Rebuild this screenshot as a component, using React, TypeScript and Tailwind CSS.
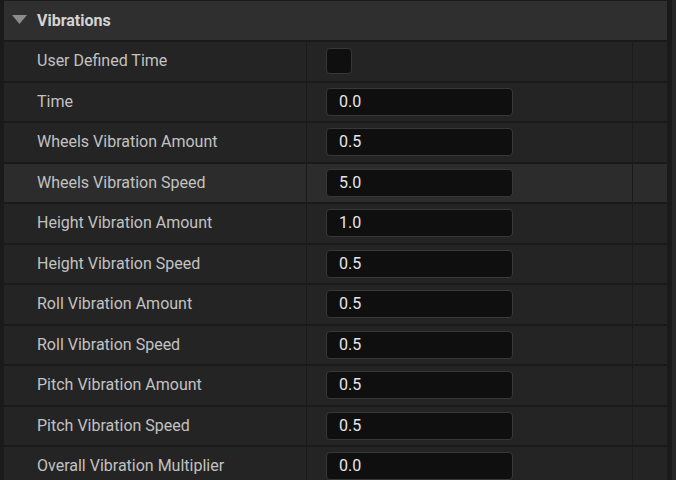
const rows: { label: string; value?: string; checkbox?: boolean; active?: boolean }[] = [
  { label: "User Defined Time", checkbox: true },
  { label: "Time", value: "0.0" },
  { label: "Wheels Vibration Amount", value: "0.5" },
  { label: "Wheels Vibration Speed", value: "5.0", active: true },
  { label: "Height Vibration Amount", value: "1.0" },
  { label: "Height Vibration Speed", value: "0.5" },
  { label: "Roll Vibration Amount", value: "0.5" },
  { label: "Roll Vibration Speed", value: "0.5" },
  { label: "Pitch Vibration Amount", value: "0.5" },
  { label: "Pitch Vibration Speed", value: "0.5" },
  { label: "Overall Vibration Multiplier", value: "0.0" },
];

export default function App() {
  return (
    <div className="w-[676px] h-[480px] overflow-hidden bg-[#1a1a1a] flex font-['Roboto',sans-serif]">
      <div className="w-[663px] ml-[4px] flex flex-col gap-[2px] pt-[1px]">
        <div className="h-[39px] shrink-0 bg-[#2f2f2f] flex items-center">
          <svg width="15" height="9" viewBox="0 0 15 9" className="ml-[8px] mr-[10px] mt-[-2px]">
            <polygon points="0,0 15,0 7.5,9" fill="#8c8c8c" />
          </svg>
          <span className="text-[16px] font-bold text-[#d4d4d4]">Vibrations</span>
        </div>
        {rows.map((row, i) => (
          <div
            key={i}
            className={`h-[38.5px] shrink-0 flex ${row.active ? "bg-[#2c2c2c]" : "bg-[#242424]"}`}
          >
            <div className="w-[302px] shrink-0 flex items-center pl-[33px] text-[16px] text-[#c2c2c2]">
              {row.label}
            </div>
            <div className="w-[327px] shrink-0 border-l border-r border-[#1a1a1a] flex items-center pl-[19px]">
              {row.checkbox ? (
                <div className="w-[26px] h-[26px] rounded-[4px] bg-[#0f0f0f] border border-[#383838]" />
              ) : (
                <div className="w-[187px] h-[28px] rounded-[4px] bg-[#0f0f0f] border border-[#383838] flex items-center pl-[12px] text-[16px] text-[#e6e6e6]">
                  {row.value}
                </div>
              )}
            </div>
            <div className="flex-1" />
          </div>
        ))}
      </div>
      <div className="w-[4px] ml-auto bg-[#262626]" />
    </div>
  );
}
